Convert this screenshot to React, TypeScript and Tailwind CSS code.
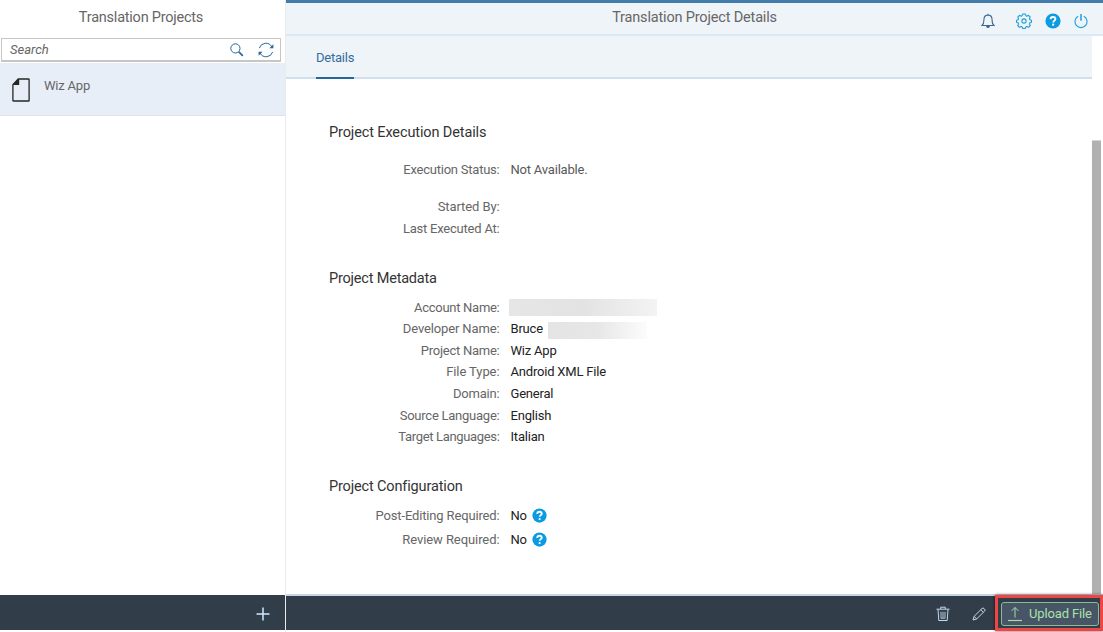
import type { ReactNode } from "react";

function HelpIcon({ className }: { className: string }) {
  return (
    <svg viewBox="0 0 16 16" className={className} fill="none">
      <circle cx="8" cy="8" r="7.6" fill="#0a9be3" />
      <path d="M5.6 6.300c0-1.400.9-2.300 2.400-2.300s2.400.8 2.400 2c0 1.600-2.200 1.700-2.200 3.400" stroke="#fff" strokeWidth="1.900" />
      <circle cx="8.150" cy="11.700" r="1.150" fill="#fff" />
    </svg>
  );
}

function SearchIcon() {
  return (
    <svg viewBox="0 0 14 14" className="h-[14px] w-[14px]" fill="none" stroke="#2d6596">
      <circle cx="5.4" cy="5.4" r="4.6" strokeWidth="1" />
      <path d="M8.8 8.8l4 4" strokeWidth="1.8" />
    </svg>
  );
}

function RefreshIcon() {
  return (
    <svg viewBox="0 0 16 16" className="h-4 w-4" fill="none" stroke="#2d6596">
      <path d="M1.3 6.100A6.900 6.900 0 0 1 13.900 4.800M14.700 9.900A6.900 6.900 0 0 1 2.100 11.200" />
      <path d="M15.400 2.200v4h-4zM.6 13.800v-4h4z" fill="#2d6596" stroke="none" />
    </svg>
  );
}

function BellIcon() {
  return (
    <svg viewBox="0 0 14 16" className="h-4 w-[14px]" fill="none" stroke="#3c6b96" strokeWidth="1.100">
      <path d="M1 12.500c1.700-1.300 1.900-2.600 1.900-5.500C2.900 4 4.600 2.100 7 2.100S11.100 4 11.100 7c0 2.900.2 4.200 1.900 5.500zM7 .8v1.300" />
      <path d="M5.200 13h3.600c0 1.200-.7 1.900-1.800 1.900S5.200 14.200 5.200 13z" fill="#2f608f" stroke="none" />
    </svg>
  );
}

function GearIcon() {
  return (
    <svg viewBox="0 0 16 16" className="h-4 w-4" fill="none" stroke="#1d9fdc" strokeWidth="1.100" strokeLinejoin="round">
      <path d="M6.700 1h2.600l.5 1.700 1.100.5 1.600-.9 1.800 1.800-.9 1.600.5 1.100 1.600.4v2.100l-1.600.5-.5 1.100.9 1.600-1.800 1.800-1.600-.9-1.100.5-.5 1.600H6.700l-.5-1.600-1.100-.5-1.600.9-1.800-1.800.9-1.600-.5-1.100-1.600-.5V7.200l1.600-.4.5-1.100-.9-1.600 1.800-1.800 1.600.9 1.100-.5z" />
      <circle cx="8" cy="8" r="2.100" />
    </svg>
  );
}

function PowerIcon() {
  return (
    <svg viewBox="0 0 14 16" className="h-4 w-[14px]" fill="none" stroke="#1d9fdc">
      <path d="M4.200 3.300a6 6 0 1 0 5.600 0" strokeWidth="1.100" />
      <path d="M7 1v6.800" strokeWidth="1.500" />
    </svg>
  );
}

function FileIcon() {
  return (
    <svg viewBox="0 0 18 24" className="h-6 w-[18px]" fill="none" stroke="#262626">
      <path d="M6.200 1h10.300q.6 0 .6.6v20.800q0 .6-.6.6h-15q-.6 0-.6-.6V6.600z" strokeWidth="1.300" strokeLinejoin="round" />
      <path d="M.9 7V6.400L6.400.9H7.200V7z" fill="#262626" stroke="none" />
    </svg>
  );
}

function TrashIcon() {
  return (
    <svg viewBox="0 0 14 16" className="h-4 w-[14px]" fill="none" stroke="#c3d9ec">
      <path d="M.5 3.200h13M4.700 3V1.200h4.600V3M2 3.400l.8 11.100h8.400L12 3.400" />
      <path d="M5 5.800v6M7 5.800v6M9 5.800v6M4.700 12.200h4.600" strokeWidth=".9" />
    </svg>
  );
}

function PencilIcon() {
  return (
    <svg viewBox="0 0 14 14" className="h-[14px] w-[14px]" fill="none" stroke="#c3d9ec" strokeLinejoin="round">
      <path d="M1 13l1.100-3.600 7.900-7.900q1-1 2 0l.6.6q1 1 0 2l-8 7.900zM8.800 2.700l2.600 2.600M2.100 9.400l2.500 2.500" />
    </svg>
  );
}

function UploadIcon() {
  return (
    <svg viewBox="0 0 14 16" className="h-4 w-[14px]" fill="none" stroke="#a5dba5">
      <path d="M7 11.500V1.500M3.500 5L7 1.500 10.500 5" />
      <path d="M0 14.500h14" strokeWidth="1.200" />
    </svg>
  );
}

function Row({ label, tracking, className, children }: { label: string; tracking: string; className: string; children?: ReactNode }) {
  return (
    <div className={`flex items-center gap-[11px] text-[13px] whitespace-nowrap ${className}`}>
      <dt className={`w-[170.500px] text-right text-[#666] ${tracking}`}>{label}</dt>
      <dd className="flex items-center tracking-[-0.2px] text-[#222]">{children}</dd>
    </div>
  );
}

function Heading({ tracking, children }: { tracking: string; children: ReactNode }) {
  return <h2 className={`h-5 text-[14.500px] leading-5 text-[#333] ${tracking}`}>{children}</h2>;
}

export default function App() {
  return (
    <div className="flex h-[632px] w-[1103px] overflow-hidden bg-white font-['Roboto',sans-serif]">
      <aside className="flex w-[286px] shrink-0 flex-col border-r border-[#e9ebed]">
        <h1 className="h-[38px] pt-2 pr-[3px] text-center text-[14.500px] leading-5 tracking-[-0.230px] text-[#666]">Translation Projects</h1>
        <div className="ml-px flex h-6 w-[280px] items-center border border-b-2 border-[#c6c6c6] pr-[6px] pl-2">
          <span className="flex-1 text-[13px] text-[#666] italic">Search</span>
          <SearchIcon />
          <span className="w-[14px]" />
          <RefreshIcon />
        </div>
        <div className="mt-px flex h-[53px] gap-[14px] border-b border-[#dce3ea] bg-[#e8eef7] pl-3">
          <div className="pt-[15px]"><FileIcon /></div>
          <span className="pt-[13px] text-[13px] leading-5 tracking-[-0.2px] text-[#666]">Wiz App</span>
        </div>
        <div className="flex-1" />
        <footer className="mb-[2px] flex h-[35px] items-center justify-end bg-[#313d49] pt-[3px] pr-[15px]">
          <svg viewBox="0 0 14 14" className="h-[14px] w-[14px]" stroke="#d1e8ff" strokeWidth="1.500">
            <path d="M7 .5v13M.5 7h13" />
          </svg>
        </footer>
      </aside>
      <main className="flex min-w-0 flex-1 flex-col">
        <header className="flex h-9 shrink-0 items-center border-t-3 border-b-2 border-t-[#427caa] border-b-[#dce8f4] bg-[#eff4f8] pr-[15px]">
          <h1 className="flex-1 pb-[2px] pl-[122px] text-center text-[14.500px] leading-5 tracking-[-0.170px] text-[#666]">Translation Project Details</h1>
          <div className="flex items-center pt-1">
            <BellIcon />
            <span className="w-[21px]" />
            <GearIcon />
            <span className="w-[13px]" />
            <HelpIcon className="h-4 w-4" />
            <span className="w-[13px]" />
            <PowerIcon />
          </div>
        </header>
        <div className="flex min-h-0 flex-1">
          <div className="flex w-[806px] flex-col">
            <nav className="flex h-[43px] border-b-2 border-[#d0deee] bg-[#eff4f8] pl-[30px]">
              <span className="h-[43px] border-b-2 border-[#266799] pt-[12px] text-[13px] leading-5 tracking-[-0.220px] text-[#346d9c]">Details</span>
            </nav>
            <section className="mt-[44px] pl-[43px]">
              <Heading tracking="tracking-[-0.120px]">Project Execution Details</Heading>
              <dl className="mt-4">
                <Row label="Execution Status:" tracking="tracking-[-0.230px]" className="h-[22px]"><span className="text-[#595959]">Not Available.</span></Row>
                <Row label="Started By:" tracking="tracking-[-0.100px]" className="mt-[15px] h-[22px]" />
                <Row label="Last Executed At:" tracking="tracking-[-0.220px]" className="h-[21.500px]" />
              </dl>
            </section>
            <section className="mt-[29.500px] pl-[43px]">
              <Heading tracking="tracking-[-0.200px]">Project Metadata</Heading>
              <dl className="mt-[7.500px]">
                <Row label="Account Name:" tracking="tracking-[-0.280px]" className="h-[21.600px]">
                  <span className="-ml-0.5 h-[17px] w-[148px] bg-linear-to-r from-[#e6e6e6] via-[#e3e3e3] to-[#f3f3f3]" />
                </Row>
                <Row label="Developer Name:" tracking="tracking-[-0.130px]" className="h-[21.600px]">
                  Bruce
                  <span className="mt-[3px] ml-[5px] h-[17px] w-[99px] bg-linear-to-r from-[#e4e4e4] via-[#e7e7e7] to-[#fcfcfc]" />
                </Row>
                <Row label="Project Name:" tracking="tracking-[-0.250px]" className="h-[21.600px]">Wiz App</Row>
                <Row label="File Type:" tracking="tracking-[-0.080px]" className="h-[21.600px]">Android XML File</Row>
                <Row label="Domain:" tracking="tracking-[-0.200px]" className="h-[21.600px]">General</Row>
                <Row label="Source Language:" tracking="tracking-[-0.240px]" className="h-[21.600px]">English</Row>
                <Row label="Target Languages:" tracking="tracking-[-0.340px]" className="h-[21.600px]">Italian</Row>
              </dl>
            </section>
            <section className="mt-[29px] pl-[43px]">
              <Heading tracking="tracking-[-0.150px]">Project Configuration</Heading>
              <dl className="mt-[7px]">
                <Row label="Post-Editing Required:" tracking="tracking-[-0.150px]" className="h-6">
                  No<HelpIcon className="ml-[5px] h-[15px] w-[15px]" />
                </Row>
                <Row label="Review Required:" tracking="tracking-[-0.080px]" className="h-6">
                  No<HelpIcon className="ml-[5px] h-[15px] w-[15px]" />
                </Row>
              </dl>
            </section>
          </div>
          <div className="mt-[104px] w-[9px] border-t border-[#d5d5d5] bg-[#b1b1b1]" />
        </div>
        <footer className="mb-[2px] flex h-9 shrink-0 items-center border-t-2 border-[#c8d6e3] bg-[#313d49]">
          <div className="flex flex-1 items-center justify-end gap-[22px] pt-[2px] pr-[9px]">
            <TrashIcon />
            <PencilIcon />
          </div>
          <div className="h-9 w-[108px] border-[3.500px] border-[#f04545] pt-[4px] pl-[3px] shadow-[0_0_3px_#000a]">
            <button className="flex h-[24px] w-[98px] items-center gap-[7px] rounded-[3px] border border-[#8dbb91] bg-[#475566] pl-[6px] text-[13px] tracking-[-0.150px] whitespace-nowrap text-[#abe2ab]">
              <UploadIcon />
              Upload File
            </button>
          </div>
        </footer>
      </main>
    </div>
  );
}
